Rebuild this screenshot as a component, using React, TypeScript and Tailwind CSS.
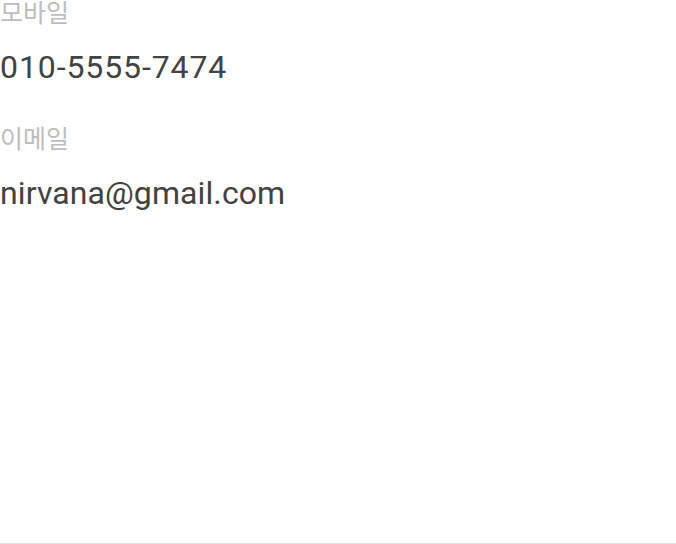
export default function App() {
  const rows = [
    { label: "모바일", value: "010-5555-7474", tracking: "tracking-[0.9px]" },
    { label: "이메일", value: "nirvana@gmail.com", tracking: "tracking-[0.1px]" },
  ];

  return (
    <div className="h-[544px] w-[676px] bg-white border-b border-[#e0e0e0] overflow-hidden font-['Roboto','Noto_Sans_CJK_KR',sans-serif]">
      <div className="-mt-[2px] flex flex-col">
        {rows.map((r) => (
          <div key={r.label} className="flex flex-col h-[126px]">
            <span className="text-[25px] leading-[32px] text-[#bdbdbd]">{r.label}</span>
            <span className={`mt-[18px] text-[32px] leading-[38px] text-[#424242] ${r.tracking}`}>{r.value}</span>
          </div>
        ))}
      </div>
    </div>
  );
}
